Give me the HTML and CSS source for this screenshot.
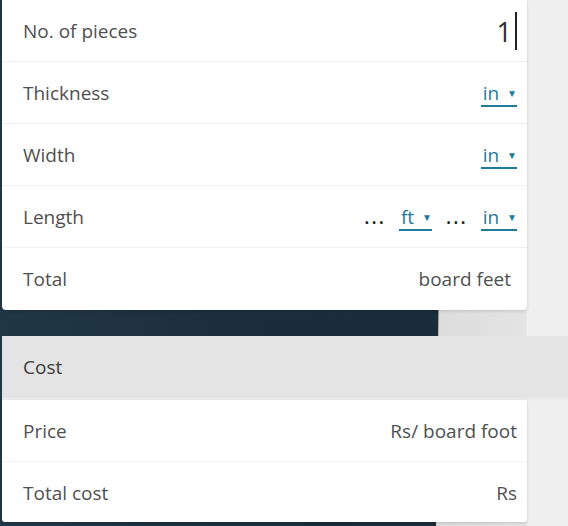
FILE: index.html
```html
<!DOCTYPE html>
<html>
<head>
<meta charset="utf-8">
<link rel="stylesheet" href="styles.css">
</head>
<body>
<div class="page">
  <div class="side-panel"></div>
  <div class="sheet">
    <section class="card">
      <div class="row">
        <span class="label">No. of pieces</span>
        <span class="value"><span class="num">1</span><span class="caret"></span></span>
      </div>
      <div class="row">
        <span class="label">Thickness</span>
        <span class="value"><span class="unit">in<span class="tri">▼</span></span></span>
      </div>
      <div class="row">
        <span class="label">Width</span>
        <span class="value"><span class="unit">in<span class="tri">▼</span></span></span>
      </div>
      <div class="row">
        <span class="label">Length</span>
        <span class="value">
          <span class="dots">...</span><span class="unit">ft<span class="tri">▼</span></span>
          <span class="dots">...</span><span class="unit">in<span class="tri">▼</span></span>
        </span>
      </div>
      <div class="row last">
        <span class="label">Total</span>
        <span class="value plain short">board feet</span>
      </div>
    </section>

    <section class="cost">
      <div class="cost-head">Cost</div>
      <div class="card bottom">
        <div class="row">
          <span class="label">Price</span>
          <span class="value plain">Rs/ board foot</span>
        </div>
        <div class="row last">
          <span class="label">Total cost</span>
          <span class="value plain">Rs</span>
        </div>
      </div>
    </section>
  </div>
</div>
</body>
</html>
```

FILE: styles.css
```css
html, body {
  margin: 0;
  padding: 0;
}
body {
  background: #1b2f3c;
  font-family: "Open Sans", "Noto Sans", sans-serif;
  width: 568px;
  height: 526px;
  overflow: hidden;
}
.page {
  position: relative;
  width: 568px;
  height: 526px;
  background: linear-gradient(90deg, #213746 0%, #1b2e3b 40%, #1a2c38 100%);
}
.side-panel {
  position: absolute;
  top: 0;
  bottom: 0;
  left: 436px;
  right: 0;
  background: linear-gradient(90deg, #dcdcdc 0px, #e4e4e4 90px, #efefef 91px, #eeeeee 100%);
  clip-path: polygon(6px 0, 100% 0, 100% 100%, 0 100%);
}
.sheet {
  position: relative;
  padding-left: 2px;
  display: flex;
  flex-direction: column;
}
.card {
  width: 525px;
  background: #ffffff;
  border-radius: 0 0 4px 4px;
  box-shadow: 0 1px 3px rgba(0,0,0,0.15);
}
.row {
  height: 61px;
  border-bottom: 1px solid #f0f0f0;
  display: flex;
  align-items: center;
  justify-content: space-between;
  padding: 0 10px 0 21px;
  font-size: 19px;
  color: #505050;
}
.row.last {
  border-bottom: none;
  height: 62px;
}
.label {
  color: #505050;
}
.value {
  display: flex;
  align-items: center;
  color: #505050;
}
.value.short {
  padding-right: 6px;
}
.num {
  font-size: 27px;
  color: #2e2e2e;
  font-weight: 400;
  margin-top: 2px;
}
.caret {
  display: inline-block;
  width: 2px;
  height: 38px;
  background: #222;
  margin-left: 3px;
}
.unit {
  color: #1f7b99;
  border-bottom: 2px solid #1f7b99;
  line-height: 20px;
  padding: 0 0 2px 2px;
  margin-top: 5px;
}
.tri {
  font-size: 10px;
  vertical-align: 3px;
  margin-left: 8px;
}
.dots {
  color: #222;
  font-size: 19px;
  margin-right: 13px;
  letter-spacing: 2px;
  font-weight: 600;
}
.unit + .dots {
  margin-left: 14px;
}
.cost {
  margin-top: 26px;
  display: flex;
  flex-direction: column;
}
.cost-head {
  width: 545px;
  height: 62px;
  background: #e4e4e4;
  display: flex;
  align-items: center;
  padding-left: 21px;
  font-size: 19px;
  color: #3c3c3c;
  border-bottom: 2px solid #ececec;
}
.card.bottom {
  height: 122px;
  border-radius: 0 0 3px 3px;
}
.card.bottom .row {
  height: 61px;
  border-bottom: 1px solid #f3f3f3;
}
.card.bottom .row.last {
  border-bottom: none;
  height: 61px;
}
```
